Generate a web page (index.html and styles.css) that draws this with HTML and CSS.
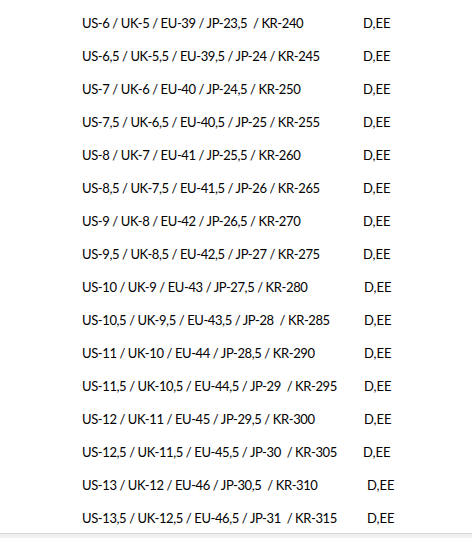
FILE: index.html
```html
<!DOCTYPE html>
<html>
<head>
<meta charset="utf-8">
<link rel="stylesheet" href="styles.css">
</head>
<body>
<div class="page">
  <div class="list">
    <div class="row"><span class="size">US-6 / UK-5 / EU-39 / JP-23,5&nbsp; / KR-240</span><span class="avail">D,EE</span></div>
    <div class="row"><span class="size">US-6,5 / UK-5,5 / EU-39,5 / JP-24 / KR-245</span><span class="avail">D,EE</span></div>
    <div class="row"><span class="size">US-7 / UK-6 / EU-40 / JP-24,5 / KR-250</span><span class="avail">D,EE</span></div>
    <div class="row"><span class="size">US-7,5 / UK-6,5 / EU-40,5 / JP-25 / KR-255</span><span class="avail">D,EE</span></div>
    <div class="row"><span class="size">US-8 / UK-7 / EU-41 / JP-25,5 / KR-260</span><span class="avail">D,EE</span></div>
    <div class="row"><span class="size">US-8,5 / UK-7,5 / EU-41,5 / JP-26 / KR-265</span><span class="avail">D,EE</span></div>
    <div class="row"><span class="size">US-9 / UK-8 / EU-42 / JP-26,5 / KR-270</span><span class="avail">D,EE</span></div>
    <div class="row"><span class="size">US-9,5 / UK-8,5 / EU-42,5 / JP-27 / KR-275</span><span class="avail">D,EE</span></div>
    <div class="row"><span class="size">US-10 / UK-9 / EU-43 / JP-27,5 / KR-280</span><span class="avail shift-s">D,EE</span></div>
    <div class="row"><span class="size">US-10,5 / UK-9,5 / EU-43,5 / JP-28&nbsp; / KR-285</span><span class="avail shift-s">D,EE</span></div>
    <div class="row"><span class="size">US-11 / UK-10 / EU-44 / JP-28,5 / KR-290</span><span class="avail shift-s">D,EE</span></div>
    <div class="row"><span class="size">US-11,5 / UK-10,5 / EU-44,5 / JP-29&nbsp; / KR-295</span><span class="avail shift-s">D,EE</span></div>
    <div class="row"><span class="size">US-12 / UK-11 / EU-45 / JP-29,5 / KR-300</span><span class="avail shift-s">D,EE</span></div>
    <div class="row"><span class="size">US-12,5 / UK-11,5 / EU-45,5 / JP-30&nbsp; / KR-305</span><span class="avail">D,EE</span></div>
    <div class="row"><span class="size">US-13 / UK-12 / EU-46 / JP-30,5&nbsp; / KR-310</span><span class="avail shift">D,EE</span></div>
    <div class="row"><span class="size">US-13,5 / UK-12,5 / EU-46,5 / JP-31&nbsp; / KR-315</span><span class="avail shift">D,EE</span></div>
  </div>
</div>
<div class="footer"></div>
</body>
</html>
```
FILE: styles.css
```css
html, body {
  margin: 0;
  padding: 0;
  background: #ffffff;
}
body {
  width: 472px;
  height: 538px;
  overflow: hidden;
  display: flex;
  flex-direction: column;
  font-family: Lato, "Liberation Sans", sans-serif;
  font-size: 13px;
  letter-spacing: -0.4px;
  color: #000000;
}
.page {
  height: 533px;
  box-sizing: border-box;
  padding: 7px 0 0 82px;
}
.list {
  display: flex;
  flex-direction: column;
}
.row {
  display: grid;
  grid-template-columns: 281px auto;
  height: 33px;
  line-height: 33px;
  white-space: nowrap;
}
.avail {
  letter-spacing: 0;
}
.avail.shift-s {
  padding-left: 1px;
}
.avail.shift {
  padding-left: 4px;
}
.footer {
  flex: 1;
  border-top: 1px solid #d6d6d6;
  background: #f0f0f0;
}
```
